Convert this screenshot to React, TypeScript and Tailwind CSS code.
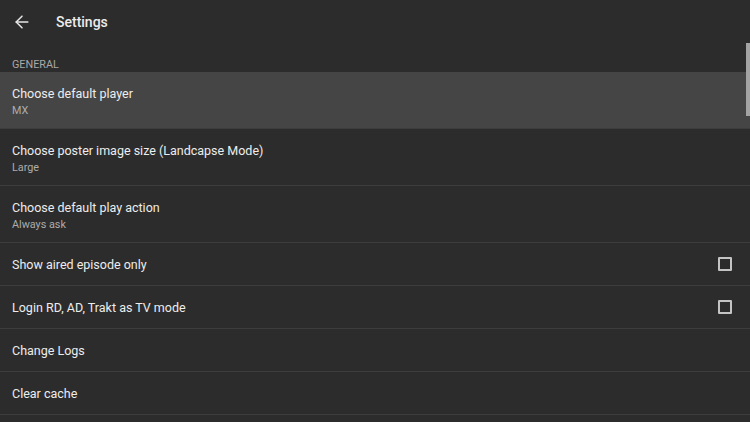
import { ArrowLeft } from "lucide-react";

// Settings screen: header, "GENERAL" group and a list of preference rows.

type Row = {
  title: string;
  summary?: string;
  checkbox?: boolean;
  active?: boolean;
};

const rows: Row[] = [
  { title: "Choose default player", summary: "MX", active: true },
  { title: "Choose poster image size (Landcapse Mode)", summary: "Large" },
  { title: "Choose default play action", summary: "Always ask" },
  { title: "Show aired episode only", checkbox: true },
  { title: "Login RD, AD, Trakt as TV mode", checkbox: true },
  { title: "Change Logs" },
  { title: "Clear cache" },
];

export default function App() {
  return (
    <div
      className="relative h-[422px] w-[750px] overflow-hidden bg-[#2c2c2c] text-[#ececec]"
      style={{ fontFamily: "Roboto, 'Noto Sans', sans-serif" }}
    >
      <header className="flex h-[44px] items-center">
        <ArrowLeft size={20} strokeWidth={1.8} className="ml-[12px] text-[#e6e6e6]" />
        <h1 className="ml-[24px] text-[14px] font-medium leading-none">Settings</h1>
      </header>

      <div className="flex h-[28px] items-end px-[12px] pb-[1px] text-[10.8px] leading-none text-[#a8a8a8]">
        GENERAL
      </div>

      <ul>
        {rows.map(({ title, summary, checkbox, active }) => (
          <li
            key={title}
            className={`flex items-center border-b border-[#3d3d3d] px-[12px] ${
              summary ? "h-[57px] pt-[2px]" : "h-[43px] pt-[1px]"
            } ${active ? "bg-[#454545]" : ""}`}
          >
            <div className="flex-1 min-w-0">
              <p className="text-[12.5px] leading-[15px] text-[#ededed]">{title}</p>
              {summary && (
                <p className="mt-[3px] text-[10.8px] leading-[13px] text-[#acacac]">{summary}</p>
              )}
            </div>
            {checkbox && (
              <span className="mr-[6px] -mt-[1px] h-[14px] w-[14px] rounded-[1px] border-2 border-[#c4c4c4]" />
            )}
          </li>
        ))}
      </ul>

      {/* scroll thumb */}
      <div className="absolute right-0 top-[43px] h-[73px] w-[4px] bg-[#a3a3a3]" />
    </div>
  );
}
